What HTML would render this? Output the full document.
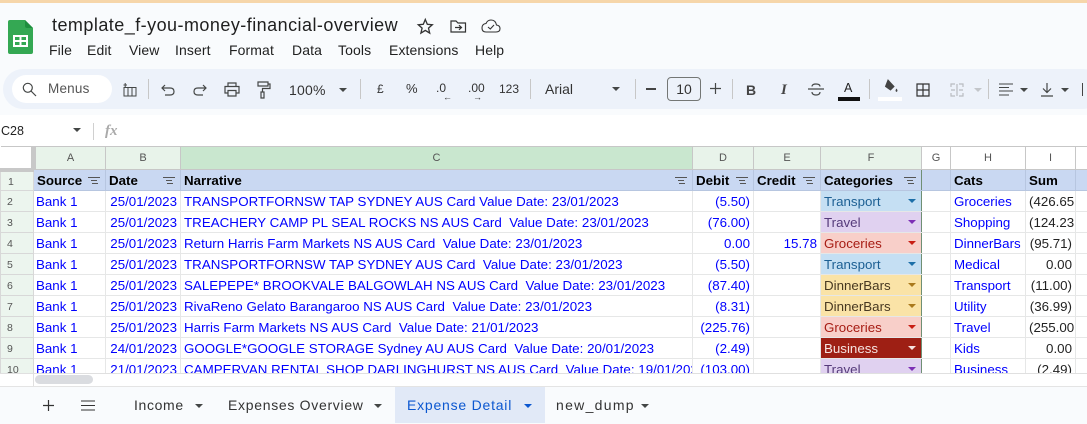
<!DOCTYPE html>
<html><head><meta charset="utf-8"><style>
*{box-sizing:border-box}
html,body{margin:0;padding:0}
body{width:1087px;height:423px;overflow:hidden;background:#f9fbfd;position:relative;font-family:"Liberation Sans",sans-serif;color:#1f1f1f}
.a{position:absolute;white-space:nowrap}
svg{position:absolute;overflow:visible}
.ic{fill:none;stroke:#444746;stroke-width:1.2}
.m{top:41px;font-size:14px;line-height:18px;color:#1f1f1f;letter-spacing:.1px}
.t{top:80px;font-size:13px;line-height:18px;color:#444746}
.sep{position:absolute;top:79px;width:1px;height:20px;background:#c7c7c7}
.car{position:absolute;width:0;height:0;border-left:4px solid transparent;border-right:4px solid transparent;border-top:4px solid #444746}
#g{position:absolute;left:0;top:146px;width:1087px;height:228px;overflow:hidden;background:#fff}
table{border-collapse:collapse;table-layout:fixed;width:1112px;font-size:13.33px}
td,th{height:21px;padding:2px 3px 0;border:1px solid #e6e7e7;overflow:hidden;white-space:nowrap;font-weight:400;line-height:18px;color:#0000ff;position:relative;text-align:left}
tr.c td{height:23px;padding:0 3px;line-height:20px;background:#fff;color:#555;font-size:11px;text-align:center;border-color:#c7c7c7;border-top:1px solid #c7c7c7}
tr.c td.s{background:#e8f3ea}
tr.c td.ss{background:#c9e7cf}
td.n{background:#ecf5ee;color:#555;font-size:10.5px;text-align:left;border-color:#d8d8d8;padding:2px 0 0 6px;line-height:16px}
tr.h td{background:#c9d8f2;color:#000;font-weight:700;border-color:#b7c6e0;height:21px}
tr.h td.n{background:#ecf5ee;color:#555;font-weight:400;border-color:#d8d8d8;padding-left:7px}
tr.d td:nth-child(2){padding-left:2px}
tr.d td:nth-child(3){text-align:right}
tr.d td:nth-child(4){letter-spacing:.025px}
.r{text-align:right!important}
.k{color:#222!important}
.f{position:absolute;right:5px;top:7px;width:12px;height:8px}
.f:before{content:"";position:absolute;left:0;right:0;top:0;height:1px;background:#555}
.f:after{content:"";position:absolute;left:3px;right:3px;top:3px;height:1px;background:#555;box-shadow:1px 3px 0 -0px #555}
td.cat:after{content:"";position:absolute;right:5px;top:8px;border-left:4px solid transparent;border-right:4px solid transparent;border-top:4px solid var(--a)}
.tr{background:#c5dff3;color:#1c5f93;--a:#1c6fa8}
.tv{background:#e0d1f0;color:#553a7a;--a:#7d2fb5}
.gr{background:#f8cfc9;color:#a61c14;--a:#c81e14}
.di{background:#fae3a7;color:#473821;--a:#a9791c}
.bu{background:#9e1f14;color:#f6e3e0;--a:#f6e3e0}
.bar{border-right:1px solid #6f8f74!important}
.tb{position:absolute;top:387px;height:36px;line-height:37px;font-size:14px;letter-spacing:.65px;color:#333;white-space:nowrap}
</style></head><body>
<div class="a" style="left:0;top:0;width:1087px;height:3px;background:#f6d6aa"></div>

<svg style="left:8px;top:20px" width="25" height="35" viewBox="0 0 25 35"><path d="M2 0H17L25 8V32Q25 34 23 34H2Q0 34 0 32V2Q0 0 2 0Z" fill="#34a853"/><path d="M17 0L25 8H19Q17 8 17 6Z" fill="#1e8e3e"/><path d="M5 15H20V27H5Z" fill="#fff"/><path d="M7 17H11.500V20H7ZM13.500 17H18V20H13.500ZM7 22H11.500V25H7ZM13.500 22H18V25H13.500Z" fill="#34a853"/></svg>

<div class="a" style="left:52px;top:14px;font-size:18px;line-height:22px;color:#1f1f1f;letter-spacing:.46px">template_f-you-money-financial-overview</div>
<svg class="ic" style="left:415px;top:16px" width="20" height="20" viewBox="0 0 20 20"><path d="M13 3.500l2 4.800 5 .5-3.800 3.300 1.200 5-4.400-2.700-4.400 2.700 1.200-5-3.800-3.300 5-.5z" style="stroke:#333;stroke-width:1.300" transform="translate(-2.700 0)"/></svg>
<svg class="ic" style="left:450px;top:19px" width="18" height="15" viewBox="0 0 18 15"><path d="M1 2H6L8 4H15.500V13H1Z" style="stroke:#333"/><path d="M5 8.500H11M9 6.200L11.500 8.500 9 10.800" style="stroke:#333;stroke-width:1.200"/></svg>
<svg class="ic" style="left:481px;top:18px" width="20" height="16" viewBox="0 0 20 16"><path d="M5 14H15Q19 14 19 10.500 19 7.500 15.500 7 14.500 2 10 2 6.500 2 5 5.500 1 6 1 10 1 14 5 14Z" style="stroke:#333;stroke-width:1.100"/><path d="M7 9L9.300 11 13 7" style="stroke:#333;stroke-width:1.100"/></svg>

<div class="a m" style="left:49px">File</div>
<div class="a m" style="left:87px">Edit</div>
<div class="a m" style="left:129px">View</div>
<div class="a m" style="left:175px">Insert</div>
<div class="a m" style="left:229px">Format</div>
<div class="a m" style="left:292px">Data</div>
<div class="a m" style="left:338px">Tools</div>
<div class="a m" style="left:389px">Extensions</div>
<div class="a m" style="left:475px">Help</div>

<div class="a" style="left:3px;top:69px;width:1100px;height:40px;background:#edf2fa;border-radius:20px"></div>
<div class="a" style="left:12px;top:75px;width:100px;height:28px;background:#fff;border-radius:14px"></div>
<svg class="ic" style="left:22px;top:82px" width="15" height="15" viewBox="0 0 15 15"><circle cx="5.800" cy="5.800" r="4.500"/><path d="M9 9L14 14"/></svg>
<div class="a t" style="left:48px;top:80px;color:#555;font-size:13.500px;letter-spacing:.2px">Menus</div>

<svg class="ic" style="left:122px;top:82px" width="16" height="15" viewBox="0 0 16 15"><path d="M2 5.500H14V14H2ZM6 5.500V14M10 5.500V14M1.500 3H5M3.200 1V5" style="stroke-width:1"/></svg>
<div class="sep" style="left:148px"></div>
<svg class="ic" style="left:161px;top:84px" width="14" height="12" viewBox="0 0 14 12"><path d="M4 1L1 4 4 7M1 4H9Q13 4 13 7.500 13 11 9 11H4"/></svg>
<svg class="ic" style="left:193px;top:84px" width="14" height="12" viewBox="0 0 14 12"><path d="M10 1L13 4 10 7M13 4H5Q1 4 1 7.500 1 11 5 11H10"/></svg>
<svg class="ic" style="left:224px;top:82px" width="16" height="15" viewBox="0 0 16 15"><path d="M4 4V1H12V4M4 11H1V4.500H15V11H12M4 8.500H12V14H4Z"/></svg>
<svg class="ic" style="left:256px;top:81px" width="15" height="18" viewBox="0 0 15 18"><path d="M2 1H12V5H2ZM12 3H14V7.500H6.500V11M5 11H8V17H5Z"/></svg>
<div class="a t" style="left:289px;top:81px;font-size:14px;letter-spacing:.2px;color:#333">100%</div>
<div class="car" style="left:339px;top:88px"></div>
<div class="sep" style="left:360px"></div>
<div class="a t" style="left:377px;top:80px;font-size:12px;color:#333">£</div>
<div class="a t" style="left:406px;top:80px;font-size:13px;color:#333">%</div>
<div class="a t" style="left:436px;top:79px;font-size:12px;color:#333">.0</div>
<div class="a t" style="left:443px;top:88px;font-size:9px;color:#333">←</div>
<div class="a t" style="left:468px;top:79px;font-size:12px;color:#333">.00</div>
<div class="a t" style="left:473px;top:88px;font-size:9px;color:#333">→</div>
<div class="a t" style="left:499px;top:80px;font-size:12px;color:#333">123</div>
<div class="sep" style="left:530px"></div>

<div class="a t" style="left:545px;top:80px;font-size:14px;color:#333">Arial</div>
<div class="car" style="left:612px;top:87px"></div>
<div class="sep" style="left:635px"></div>
<div class="a" style="left:646px;top:88px;width:10px;height:1.500px;background:#444"></div>
<div class="a" style="left:667px;top:77px;width:34px;height:24px;border:1px solid #747775;border-radius:4px"></div>
<div class="a t" style="left:667px;top:80px;width:34px;text-align:center;font-size:14px;color:#333">10</div>
<svg class="ic" style="left:710px;top:83px" width="11" height="11" viewBox="0 0 11 11"><path d="M5.500 0V11M0 5.500H11"/></svg>
<div class="sep" style="left:732px"></div>
<div class="a" style="left:746px;top:81px;font-size:14px;line-height:18px;font-weight:700;color:#444">B</div>
<div class="a" style="left:781px;top:81px;font-size:15px;line-height:18px;font-style:italic;font-family:'Liberation Serif',serif;font-weight:700;color:#444">I</div>
<svg class="ic" style="left:808px;top:83px" width="16" height="13" viewBox="0 0 16 13"><path d="M0 6H16M4 3.500Q4 1 8 1 12 1 12 3.500M4 9Q4 12 8 12 12 12 12 9"/></svg>
<div class="a" style="left:844px;top:81px;font-size:12.500px;line-height:14px;color:#222">A</div>
<div class="a" style="left:838px;top:97px;width:22px;height:4px;background:#111"></div>
<div class="sep" style="left:869px"></div>
<svg style="left:884px;top:79px" width="16" height="15" viewBox="0 0 16 15"><path d="M4 1L10 7.500 6.500 11 1.500 7.500Z" fill="#444" stroke="#444"/><path d="M12.500 9.500Q10.500 12 12.500 13 14.500 12 12.500 9.500Z" fill="#444"/></svg>
<div class="a" style="left:878px;top:97px;width:24px;height:4px;background:#fff"></div>
<svg class="ic" style="left:916px;top:83px" width="14" height="14" viewBox="0 0 14 14"><path d="M1 1H13V13H1ZM7 1V13M1 7H13" style="stroke:#333"/></svg>
<svg class="ic" style="left:950px;top:83px" width="14" height="14" viewBox="0 0 14 14"><path d="M1 4V1H5M9 1H13V4M1 10V13H5M9 13H13V10M7 1V13M1 7H5M9 7H13" style="stroke:#b9bcc0"/></svg>
<div class="car" style="left:974px;top:88px;border-top-color:#c3c6ca"></div>
<div class="sep" style="left:988px"></div>
<svg class="ic" style="left:999px;top:83px" width="14" height="13" viewBox="0 0 14 13"><path d="M0 1H14M0 4.500H10M0 8H14M0 12H10" style="stroke-width:1"/></svg>
<div class="car" style="left:1020px;top:88px"></div>
<svg class="ic" style="left:1040px;top:82px" width="14" height="15" viewBox="0 0 14 15"><path d="M7 1V10M3 6.500L7 10.500 11 6.500M1 14H13"/></svg>
<div class="car" style="left:1061px;top:88px"></div>
<div class="a" style="left:1082px;top:83px;width:5px;height:13px;border-left:1.500px solid #444"></div>

<div class="a" style="left:0;top:115px;width:1087px;height:31px;background:#fff"></div>
<div class="a" style="left:1px;top:123px;font-size:12.500px;line-height:16px;color:#222">C28</div>
<div class="car" style="left:73px;top:128px"></div>
<div class="a" style="left:93px;top:123px;width:1px;height:17px;background:#d0d0d0"></div>
<div class="a" style="left:105px;top:122px;font-family:'Liberation Serif',serif;font-style:italic;font-size:15px;line-height:18px;color:#aaa;font-weight:700">fx</div>

<div id="g"><table>
<colgroup><col style="width:33px"><col style="width:72px"><col style="width:75px"><col style="width:512px"><col style="width:61px"><col style="width:67px"><col style="width:101px"><col style="width:29px"><col style="width:75px"><col style="width:50px"><col style="width:37px"></colgroup>
<tr class="c"><td style="background:#fff;border-right:5px solid #c8c8c8;border-bottom:4px solid #c8c8c8;border-left:0"></td><td class="s">A</td><td class="s">B</td><td class="ss">C</td><td class="s">D</td><td class="s">E</td><td class="s">F</td><td>G</td><td>H</td><td>I</td><td></td></tr>
<tr class="h"><td class="n">1</td><td>Source<i class="f"></i></td><td>Date<i class="f"></i></td><td>Narrative<i class="f"></i></td><td>Debit<i class="f"></i></td><td>Credit<i class="f"></i></td><td class="bar">Categories<i class="f"></i></td><td></td><td>Cats</td><td>Sum</td><td></td></tr>
<tr class="d"><td class="n">2</td><td>Bank 1</td><td>25/01/2023</td><td>TRANSPORTFORNSW TAP SYDNEY AUS Card Value Date: 23/01/2023</td><td class="r">(5.50)</td><td class="r"></td><td class="cat tr bar">Transport</td><td></td><td>Groceries</td><td class="k">(426.65</td><td></td></tr>
<tr class="d"><td class="n">3</td><td>Bank 1</td><td>25/01/2023</td><td>TREACHERY CAMP PL SEAL ROCKS NS AUS Card&nbsp; Value Date: 23/01/2023</td><td class="r">(76.00)</td><td class="r"></td><td class="cat tv bar">Travel</td><td></td><td>Shopping</td><td class="k">(124.23</td><td></td></tr>
<tr class="d"><td class="n">4</td><td>Bank 1</td><td>25/01/2023</td><td>Return Harris Farm Markets NS AUS Card&nbsp; Value Date: 23/01/2023</td><td class="r">0.00</td><td class="r">15.78</td><td class="cat gr bar">Groceries</td><td></td><td>DinnerBars</td><td class="k r">(95.71)</td><td></td></tr>
<tr class="d"><td class="n">5</td><td>Bank 1</td><td>25/01/2023</td><td>TRANSPORTFORNSW TAP SYDNEY AUS Card&nbsp; Value Date: 23/01/2023</td><td class="r">(5.50)</td><td class="r"></td><td class="cat tr bar">Transport</td><td></td><td>Medical</td><td class="k r">0.00</td><td></td></tr>
<tr class="d"><td class="n">6</td><td>Bank 1</td><td>25/01/2023</td><td>SALEPEPE* BROOKVALE BALGOWLAH NS AUS Card&nbsp; Value Date: 23/01/2023</td><td class="r">(87.40)</td><td class="r"></td><td class="cat di bar">DinnerBars</td><td></td><td>Transport</td><td class="k r">(11.00)</td><td></td></tr>
<tr class="d"><td class="n">7</td><td>Bank 1</td><td>25/01/2023</td><td>RivaReno Gelato Barangaroo NS AUS Card&nbsp; Value Date: 23/01/2023</td><td class="r">(8.31)</td><td class="r"></td><td class="cat di bar">DinnerBars</td><td></td><td>Utility</td><td class="k r">(36.99)</td><td></td></tr>
<tr class="d"><td class="n">8</td><td>Bank 1</td><td>25/01/2023</td><td>Harris Farm Markets NS AUS Card&nbsp; Value Date: 21/01/2023</td><td class="r">(225.76)</td><td class="r"></td><td class="cat gr bar">Groceries</td><td></td><td>Travel</td><td class="k">(255.00</td><td></td></tr>
<tr class="d"><td class="n">9</td><td>Bank 1</td><td>24/01/2023</td><td>GOOGLE*GOOGLE STORAGE Sydney AU AUS Card&nbsp; Value Date: 20/01/2023</td><td class="r">(2.49)</td><td class="r"></td><td class="cat bu bar">Business</td><td></td><td>Kids</td><td class="k r">0.00</td><td></td></tr>
<tr class="d"><td class="n">10</td><td>Bank 1</td><td>21/01/2023</td><td>CAMPERVAN RENTAL SHOP DARLINGHURST NS AUS Card&nbsp; Value Date: 19/01/2023</td><td class="r">(103.00)</td><td class="r"></td><td class="cat tv bar">Travel</td><td></td><td>Business</td><td class="k r">(2.49)</td><td></td></tr>
</table></div>

<div class="a" style="left:0;top:373px;width:1087px;height:14px;background:#fff;border-top:1px solid #e0e0e0;border-bottom:1px solid #e4e4e4"></div>
<div class="a" style="left:33px;top:374px;width:1px;height:12px;background:#e0e0e0"></div>
<div class="a" style="left:35px;top:375px;width:58px;height:9px;background:#dadce0;border-radius:5px"></div>

<svg class="ic" style="left:43px;top:400px" width="11" height="11" viewBox="0 0 11 11"><path d="M5.500 0V11M0 5.500H11" style="stroke:#333"/></svg>
<svg class="ic" style="left:81px;top:400px" width="14" height="11" viewBox="0 0 14 11"><path d="M0 1H14M0 5.500H14M0 10H14" style="stroke:#333;stroke-width:1.100"/></svg>
<div class="tb" style="left:134px">Income</div>
<div class="car" style="left:195px;top:404px"></div>
<div class="tb" style="left:228px;letter-spacing:.7px">Expenses Overview</div>
<div class="car" style="left:374px;top:404px"></div>
<div class="a" style="left:395px;top:387px;width:150px;height:36px;background:#e1e9f7"></div>
<div class="tb" style="left:407px;color:#0b57d0;letter-spacing:.78px">Expense Detail</div>
<div class="car" style="left:524px;top:404px;border-top-color:#0b57d0"></div>
<div class="tb" style="left:556px;letter-spacing:1.3px">new_dump</div>
<div class="car" style="left:641px;top:404px"></div>
</body></html>
